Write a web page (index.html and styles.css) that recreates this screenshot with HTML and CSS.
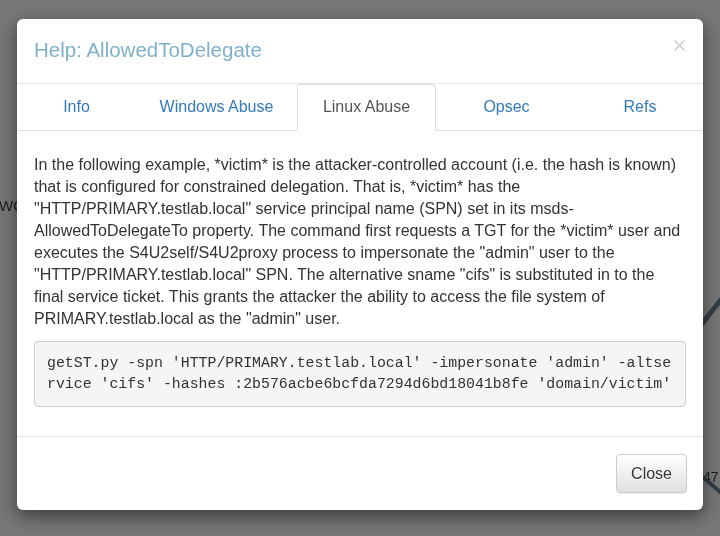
FILE: index.html
```html
<!DOCTYPE html>
<html lang="en">
<head>
<meta charset="utf-8">
<title>Help: AllowedToDelegate</title>
<link rel="stylesheet" href="styles.css">
</head>
<body>
<div class="graph">
  <span class="node-label label-wo">WO</span>
  <span class="node-label label-47">47</span>
  <svg class="edges" width="720" height="536" viewBox="0 0 720 536">
    <line class="edge" x1="698" y1="329" x2="726" y2="293"/>
    <line class="edge thin" x1="698" y1="473" x2="726" y2="497"/>
  </svg>
</div>

<div class="modal">
  <div class="modal-header">
    <h4 class="modal-title">Help: AllowedToDelegate</h4>
    <button class="close" aria-label="Close">
      <svg width="11" height="11" viewBox="0 0 11 11"><path d="M0.5 0.5L10.5 10.5M10.5 0.5L0.5 10.5"/></svg>
    </button>
  </div>
  <ul class="tabs">
    <li class="tab"><a>Info</a></li>
    <li class="tab"><a>Windows Abuse</a></li>
    <li class="tab active"><a>Linux Abuse</a></li>
    <li class="tab"><a>Opsec</a></li>
    <li class="tab"><a>Refs</a></li>
  </ul>
  <div class="modal-body">
    <p>In the following example, *victim* is the attacker-controlled account (i.e. the hash is known) that is configured for constrained delegation. That is, *victim* has the "HTTP/PRIMARY.testlab.local" service principal name (SPN) set in its msds-AllowedToDelegateTo property. The command first requests a TGT for the *victim* user and executes the S4U2self/S4U2proxy process to impersonate the "admin" user to the "HTTP/PRIMARY.testlab.local" SPN. The alternative sname "cifs" is substituted in to the final service ticket. This grants the attacker the ability to access the file system of PRIMARY.testlab.local as the "admin" user.</p>
    <pre>getST.py -spn 'HTTP/PRIMARY.testlab.local' -impersonate 'admin' -altservice 'cifs' -hashes :2b576acbe6bcfda7294d6bd18041b8fe 'domain/victim'</pre>
  </div>
  <div class="modal-footer">
    <button class="btn">Close</button>
  </div>
</div>
</body>
</html>
```

FILE: styles.css
```css
* { box-sizing: border-box; }

html, body {
  margin: 0;
  padding: 0;
}

body {
  width: 720px;
  height: 536px;
  overflow: hidden;
  background: #777;
  font-family: "Liberation Sans", Arial, Helvetica, sans-serif;
  font-size: 16px;
  line-height: 22px;
  color: #333;
}

/* graph canvas behind the backdrop */
.graph {
  position: fixed;
  left: 0;
  top: 0;
  width: 720px;
  height: 536px;
}

.edges {
  position: absolute;
  left: 0;
  top: 0;
}

.edge {
  stroke: #343f45;
  stroke-width: 5;
}

.edge.thin {
  stroke-width: 4;
}

.node-label {
  position: absolute;
  font-family: "Liberation Sans", Arial, sans-serif;
  line-height: 16px;
  color: #1c1c1c;
}

.label-wo { left: -1px; top: 198px; font-size: 15px; }
.label-47 { left: 703px; top: 469px; font-size: 14px; }

/* modal */
.modal {
  position: relative;
  margin: 19px 0 0 17px;
  width: 686px;
  background: #fff;
  border-radius: 6px;
  box-shadow: 0 6px 18px rgba(0, 0, 0, 0.5);
}

.modal-header {
  display: flex;
  justify-content: space-between;
  align-items: flex-start;
  padding: 17px 18px 19px 17px;
  border-bottom: 1px solid #e5e5e5;
}

.modal-title {
  margin: 0;
  font-size: 20.5px;
  line-height: 28px;
  font-weight: normal;
  color: #7fb1c9;
}

.close {
  margin: 4px 0 0 0;
  padding: 0;
  border: 0;
  background: none;
  width: 11px;
  height: 11px;
  display: block;
}

.close svg {
  display: block;
}

.close path {
  stroke: #cccccc;
  stroke-width: 1.5;
  fill: none;
}

.tabs {
  list-style: none;
  margin: 0;
  padding: 0;
  display: grid;
  grid-template-columns: 119px 161px 139px 141px 126px;
}

.tab a {
  display: block;
  text-align: center;
  padding: 11px 0 12px;
  line-height: 22px;
  color: #337ab7;
  border: 1px solid transparent;
  border-bottom-color: #ddd;
  border-radius: 4px 4px 0 0;
}

.tab.active a {
  color: #555;
  border-color: #ddd;
  border-bottom-color: #fff;
}

.modal-body {
  padding: 23px 17px 18px 17px;
}

.modal-body p {
  margin: 0 0 11px 0;
}

.modal-body pre {
  margin: 0 0 11px 0;
  padding: 11px 11px 11px 12px;
  font-family: "Liberation Mono", "Courier New", monospace;
  font-size: 14.86px;
  line-height: 21px;
  color: #333;
  background: #f5f5f5;
  border: 1px solid #ccc;
  border-radius: 4px;
  white-space: pre-wrap;
  word-break: break-all;
}

.modal-footer {
  display: flex;
  justify-content: flex-end;
  padding: 17px 16px 17px 17px;
  border-top: 1px solid #e5e5e5;
}

.btn {
  font-family: "Liberation Sans", Arial, sans-serif;
  font-size: 16px;
  line-height: 23px;
  padding: 7px 14px;
  color: #333;
  background: linear-gradient(to bottom, #fff 0%, #e0e0e0 100%);
  border: 1px solid #ccc;
  border-radius: 4px;
  text-shadow: 0 1px 0 #fff;
  box-shadow: inset 0 1px 0 rgba(255, 255, 255, 0.15), 0 1px 1px rgba(0, 0, 0, 0.075);
}
```
